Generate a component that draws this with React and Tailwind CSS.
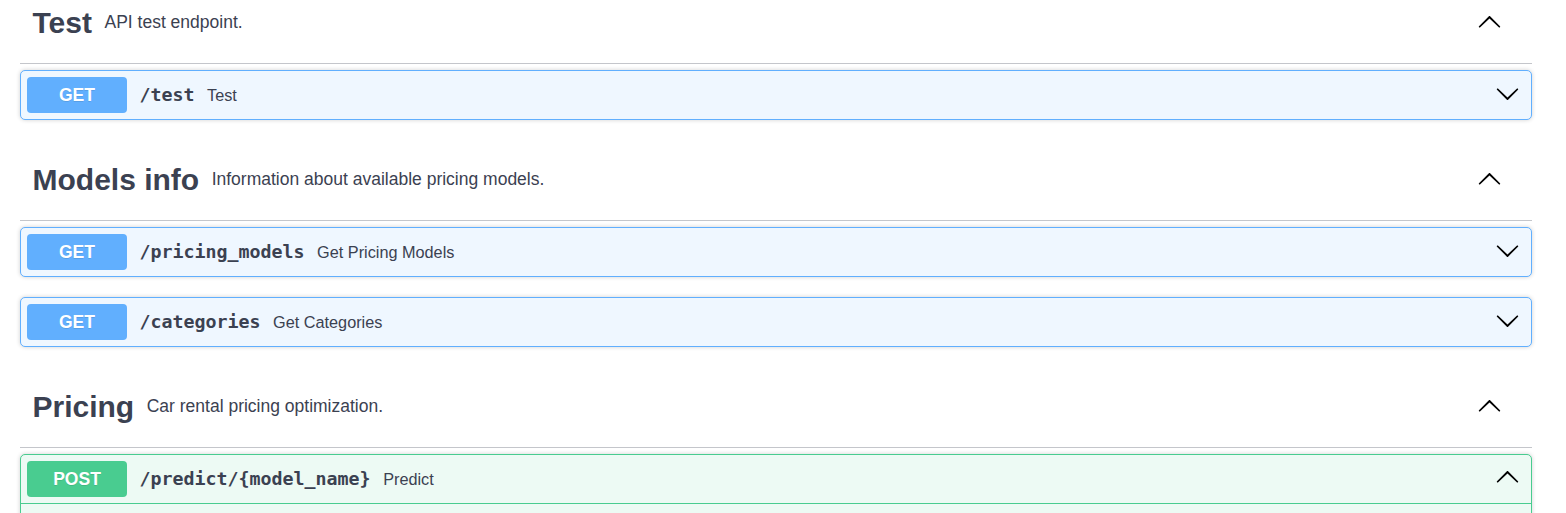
import React from "react";

const sections = [
  {
    name: "Test",
    description: "API test endpoint.",
    ops: [{ method: "GET", path: "/test", summary: "Test" }],
  },
  {
    name: "Models info",
    description: "Information about available pricing models.",
    ops: [
      { method: "GET", path: "/pricing_models", summary: "Get Pricing Models" },
      { method: "GET", path: "/categories", summary: "Get Categories" },
    ],
  },
  {
    name: "Pricing",
    description: "Car rental pricing optimization.",
    ops: [
      {
        method: "POST",
        path: "/predict/{model_name}",
        summary: "Predict",
        open: true,
      },
    ],
  },
];

// swagger-ui style arrow, points down by default
function Arrow({ up = false }) {
  return (
    <svg
      viewBox="0 0 20 20"
      className={up ? "w-[25px] h-[25px] rotate-180" : "w-[25px] h-[25px]"}
      fill="#000"
    >
      <path d="M17.418 6.109c.272-.268.709-.268.979 0s.271.701 0 .969l-7.908 7.83c-.27.268-.707.268-.979 0l-7.908-7.83c-.27-.268-.27-.701 0-.969.271-.268.709-.268.979 0L10 13.25l7.418-7.141z" />
    </svg>
  );
}

function Operation({ op }) {
  const isPost = op.method === "POST";
  return (
    <div
      className={
        isPost
          ? "rounded-[5px] border border-[#49cc90] bg-[#edfaf4] shadow-[0_0_4px_rgba(0,0,0,0.19)]"
          : "rounded-[5px] border border-[#61affe] bg-[#eff7ff] shadow-[0_0_4px_rgba(0,0,0,0.19)]"
      }
    >
      <div
        className={
          op.open
            ? "flex items-center p-[6px] border-b border-[#49cc90]"
            : "flex items-center p-[6px]"
        }
      >
        <span
          className={
            isPost
              ? "w-[100px] h-[36px] flex items-center justify-center rounded-[4px] bg-[#49cc90] text-white font-bold text-[17.5px] [text-shadow:0_1px_0_rgba(0,0,0,0.1)]"
              : "w-[100px] h-[36px] flex items-center justify-center rounded-[4px] bg-[#61affe] text-white font-bold text-[17.5px] [text-shadow:0_1px_0_rgba(0,0,0,0.1)]"
          }
        >
          {op.method}
        </span>
        <span className="px-[12.5px] font-['DejaVu_Sans_Mono',monospace] font-bold text-[18.3px] text-[#3b4151]">
          {op.path}
        </span>
        <span className="flex-1 text-[16.25px] text-[#3b4151]">{op.summary}</span>
        <span className="mr-[5px] -mt-[4px] flex items-center">
          <Arrow up={op.open} />
        </span>
      </div>
      {op.open && <div className="h-[20px]" />}
    </div>
  );
}

export default function App() {
  return (
    <div className="w-[1566px] h-[513px] overflow-hidden bg-white font-['Liberation_Sans',Arial,sans-serif] text-[#3b4151]">
      <div className="ml-[20px] w-[1512px] -mt-[18px]">
        {sections.map((section) => (
          <div key={section.name} className="mb-[19px]">
            <div className="h-[82px] flex items-center pl-[12.5px] pr-[30px] border-b border-[#c4c6cb] mb-[6px]">
              <span className="text-[30px] font-bold">{section.name}</span>
              <span className="flex-1 px-[12.5px] text-[17.5px]">
                {section.description}
              </span>
              <Arrow up />
            </div>
            <div className="flex flex-col gap-[20px]">
              {section.ops.map((op) => (
                <Operation key={op.path} op={op} />
              ))}
            </div>
          </div>
        ))}
      </div>
    </div>
  );
}
